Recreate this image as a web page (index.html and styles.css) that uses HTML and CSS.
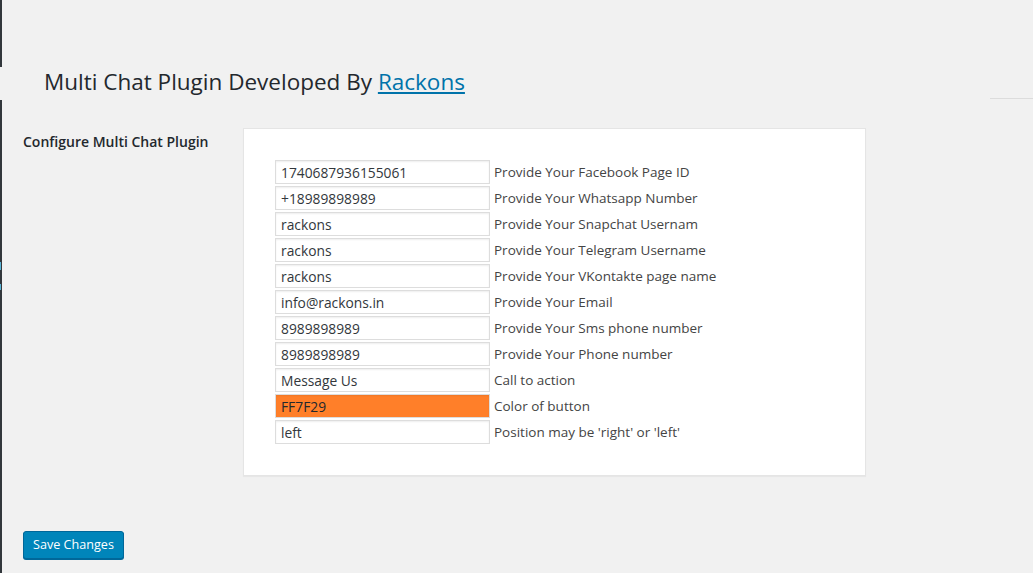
FILE: index.html
```html
<!DOCTYPE html>
<html>
<head>
<meta charset="utf-8">
<link rel="stylesheet" href="styles.css">
</head>
<body>
<div class="edge edge-top"></div>
<div class="edge edge-bottom"></div>
<div class="edge-blue b1"></div>
<div class="edge-blue b2"></div>
<div class="top-rule"></div>
<div class="wrap">
  <h1 class="title">Multi Chat Plugin Developed By <a href="#">Rackons</a></h1>
  <div class="settings">
    <div class="section-label">Configure Multi Chat Plugin</div>
    <div class="panel">
      <div class="row"><input class="field" value="1740687936155061"><span class="desc">Provide Your Facebook Page ID</span></div>
      <div class="row"><input class="field" value="+18989898989"><span class="desc">Provide Your Whatsapp Number</span></div>
      <div class="row"><input class="field" value="rackons"><span class="desc">Provide Your Snapchat Usernam</span></div>
      <div class="row"><input class="field" value="rackons"><span class="desc">Provide Your Telegram Username</span></div>
      <div class="row"><input class="field" value="rackons"><span class="desc">Provide Your VKontakte page name</span></div>
      <div class="row"><input class="field" value="info@rackons.in"><span class="desc">Provide Your Email</span></div>
      <div class="row"><input class="field" value="8989898989"><span class="desc">Provide Your Sms phone number</span></div>
      <div class="row"><input class="field" value="8989898989"><span class="desc">Provide Your Phone number</span></div>
      <div class="row"><input class="field" value="Message Us"><span class="desc">Call to action</span></div>
      <div class="row"><input class="field field-color" value="FF7F29"><span class="desc">Color of button</span></div>
      <div class="row"><input class="field" value="left"><span class="desc">Position may be 'right' or 'left'</span></div>
    </div>
  </div>
  <button class="save">Save Changes</button>
</div>
</body>
</html>
```
FILE: styles.css
```css
html, body {
  margin: 0;
  padding: 0;
  background: #f1f1f1;
  height: 100%;
  overflow: hidden;
}
body {
  font-family: "Open Sans", "Noto Sans", sans-serif;
  color: #23282d;
  font-size: 14px;
  position: relative;
}
.edge {
  position: absolute;
  left: 0;
  width: 2px;
  background: #32373c;
}
.edge-top { top: 0; height: 67px; }
.edge-bottom { top: 100px; bottom: 0; }
.edge-blue {
  position: absolute;
  left: 0;
  width: 1px;
  background: #5ab4d6;
}
.b1 { top: 262px; height: 8px; }
.b2 { top: 284px; height: 6px; }
.top-rule {
  position: absolute;
  right: 0;
  top: 98px;
  width: 43px;
  height: 1px;
  background: #dcdcdc;
}
.wrap {
  padding: 0 0 0 23px;
}
.title {
  margin: 0;
  padding: 66px 0 0 21px;
  font-size: 22.5px;
  font-weight: 400;
  line-height: 32px;
  color: #23282d;
  height: 62px;
}
.title a {
  color: #0073aa;
  text-decoration: underline;
}
.settings {
  display: flex;
  align-items: flex-start;
}
.section-label {
  width: 220px;
  font-weight: 600;
  font-size: 14px;
  line-height: 20px;
  padding-top: 4px;
  color: #23282d;
}
.panel {
  background: #fff;
  border: 1px solid #e5e5e5;
  box-shadow: 0 1px 1px rgba(0,0,0,0.04);
  width: 558px;
  padding: 31px 32px 31px 31px;
  display: flex;
  flex-direction: column;
  gap: 2px;
}
.row {
  display: flex;
  align-items: center;
  height: 24px;
}
.field {
  box-sizing: border-box;
  width: 215px;
  height: 24px;
  margin: 0;
  padding: 0 5px;
  border: 1px solid #ddd;
  box-shadow: inset 0 1px 2px rgba(0,0,0,0.07);
  font-family: inherit;
  font-size: 13.8px;
  color: #32373c;
  background: #fff;
  outline: none;
}
.field-color {
  background: #ff7f29;
  color: #23282d;
}
.desc {
  margin-left: 4px;
  color: #444;
  font-size: 13.5px;
  padding-bottom: 1px;
}
.save {
  display: block;
  margin-top: 55px;
  background: #0085ba;
  border: 1px solid #006799;
  border-radius: 3px;
  box-shadow: 0 1px 0 #006799;
  color: #fff;
  font-family: inherit;
  font-size: 12.6px;
  height: 28px;
  padding: 0;
  line-height: 26px;
  width: 101px;
  white-space: nowrap;
}
```
